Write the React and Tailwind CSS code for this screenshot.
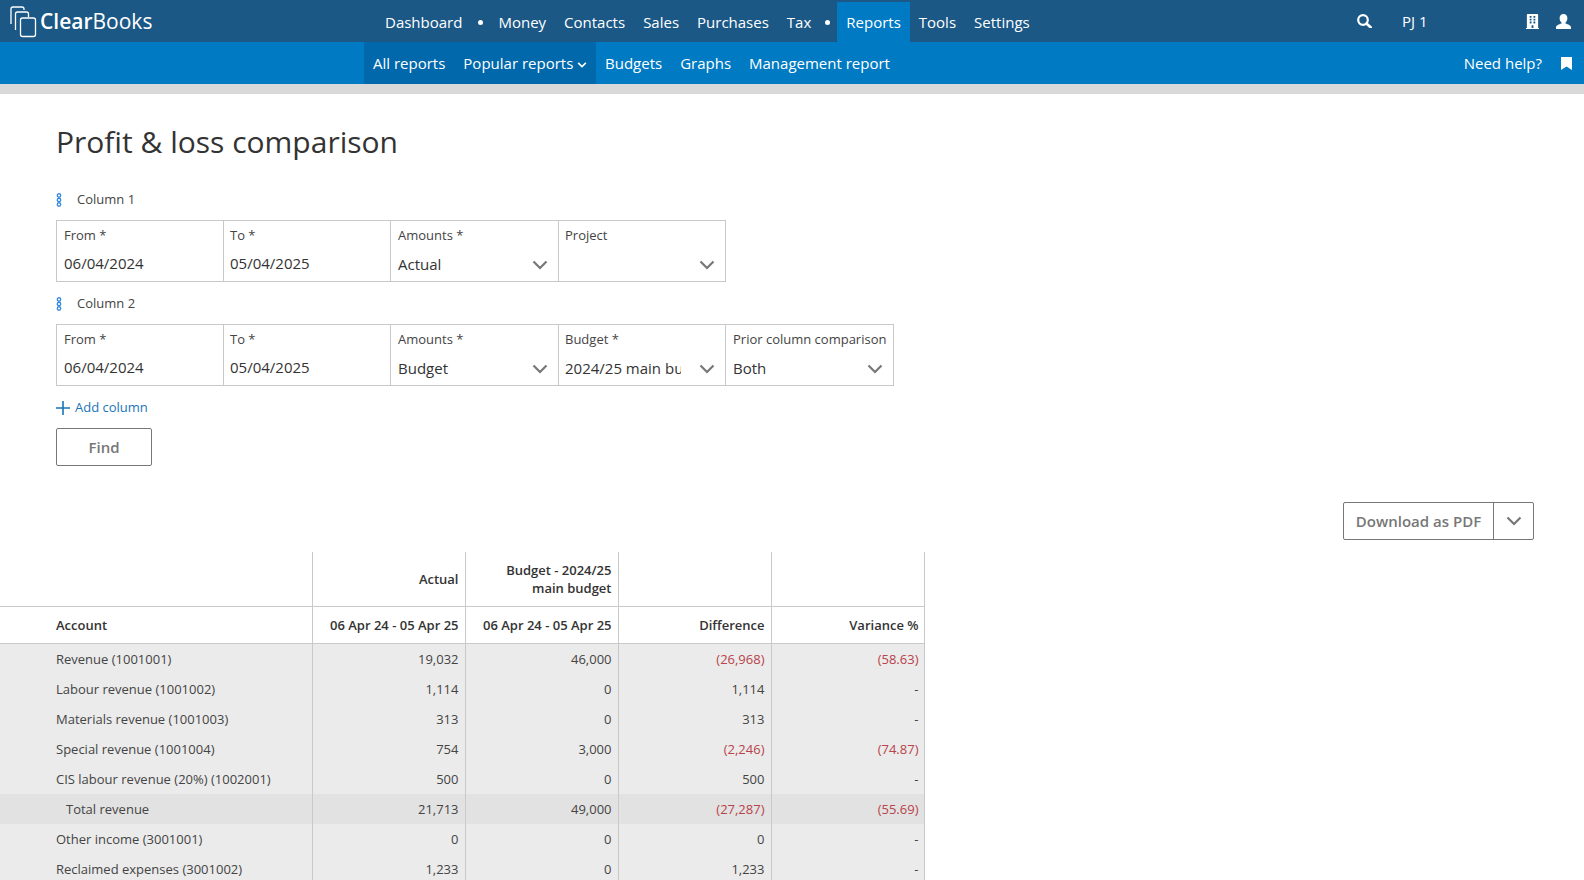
import React from "react";
import { FaBuilding, FaChevronDown } from "react-icons/fa";

const rows = [
  ["Revenue (1001001)", "19,032", "46,000", "(26,968)", "(58.63)"],
  ["Labour revenue (1001002)", "1,114", "0", "1,114", "-"],
  ["Materials revenue (1001003)", "313", "0", "313", "-"],
  ["Special revenue (1001004)", "754", "3,000", "(2,246)", "(74.87)"],
  ["CIS labour revenue (20%) (1002001)", "500", "0", "500", "-"],
  ["Total revenue", "21,713", "49,000", "(27,287)", "(55.69)"],
  ["Other income (3001001)", "0", "0", "0", "-"],
  ["Reclaimed expenses (3001002)", "1,233", "0", "1,233", "-"],
];

function Logo() {
  return (
    <svg width="28" height="36" viewBox="0 0 28 36" fill="none" stroke="#fff" strokeWidth="1.3" className="shrink-0">
      <path d="M1 21V6a2 2 0 0 1 2-2h9a2 2 0 0 1 2 2v1" />
      <path d="M5.500 27V11a2 2 0 0 1 2-2h9a2 2 0 0 1 2 2v3" />
      <rect x="10.500" y="15" width="15" height="18.500" rx="2" />
    </svg>
  );
}

function Chevron() {
  return (
    <svg width="16" height="10" viewBox="0 0 16 10" fill="none" stroke="#777" strokeWidth="2.2">
      <path d="M1.500 1.500 8 8l6.500-6.500" />
    </svg>
  );
}

function DragDots() {
  return (
    <svg width="6" height="14" viewBox="0 0 6 14" fill="none" stroke="#3a8fd6" strokeWidth="1.400" className="shrink-0">
      <circle cx="3" cy="2.500" r="1.700" />
      <circle cx="3" cy="7" r="1.700" />
      <circle cx="3" cy="11.500" r="1.700" />
    </svg>
  );
}

function SearchIcon() {
  return (
    <svg width="15" height="14" viewBox="0 0 15 14" fill="none" stroke="#fff" className="shrink-0">
      <circle cx="6" cy="6" r="4.800" strokeWidth="2.200" />
      <path d="M9.500 9.500 13.800 13.500" strokeWidth="2.600" strokeLinecap="round" />
    </svg>
  );
}

function UserIcon() {
  return (
    <svg width="15" height="15" viewBox="0 0 15 15" fill="#fff" className="shrink-0">
      <path d="M7.500 0C5 0 3.600 1.800 3.600 4.200c0 1.700.8 3.300 1.900 4.200v1.200C3 10.500 0 11.500 0 13.500V15h15v-1.500c0-2-3-3-5.500-3.900V8.400c1.100-.9 1.900-2.500 1.900-4.200C11.400 1.800 10 0 7.500 0z" />
    </svg>
  );
}

function BookmarkIcon() {
  return (
    <svg width="11" height="13" viewBox="0 0 11 13" fill="#fff" className="shrink-0">
      <path d="M0 0h11v13L5.500 9.500 0 13z" />
    </svg>
  );
}

function NavDot({ className }) {
  return <span className={`w-[5px] h-[5px] rounded-full bg-white mb-[17px] ${className}`} />;
}

function NavLink({ children, active }) {
  return <a className={`px-[9px] h-[40px] leading-[40px] ${active ? "bg-[#007ac3]" : ""}`}>{children}</a>;
}

function Field({ label, value, select, clip, width = "w-[167px]", last, tight }) {
  return (
    <div className={`${width} h-full shrink-0 pr-[7px] pt-[5px] ${tight ? "pl-[6px]" : "pl-[7px]"} ${last ? "" : "border-r border-[#c9c9c9]"} relative`}>
      <div className="text-[13px] leading-[18px] text-[#444] whitespace-nowrap">{label}</div>
      {select ? (
        <div className={`text-[15px] leading-[20px] mt-[10px] text-[#333] whitespace-nowrap overflow-hidden ${clip ? "w-[116px]" : ""}`}>
          {value || "\u00a0"}
        </div>
      ) : (
        <div className="text-[15px] leading-[20px] mt-[9px] text-[#333]">{value}</div>
      )}
      {select && (
        <div className="absolute right-[10px] top-[39px]">
          <Chevron />
        </div>
      )}
    </div>
  );
}

function ColumnForm({ name, children }) {
  return (
    <div>
      <div className="flex items-center h-[20px] text-[13px] text-[#444]">
        <DragDots />
        <span className="ml-[15px]">{name}</span>
      </div>
      <div className="flex w-fit h-[62px] mt-[10px] border border-[#c9c9c9]">{children}</div>
    </div>
  );
}

export default function App() {
  return (
    <div className="w-[1584px] h-[880px] overflow-hidden bg-white font-['Open_Sans',sans-serif] text-[#333]">
      <header className="h-[42px] bg-[#1b5886] flex text-white text-[15px]">
        <div className="w-[376px] pl-[10px] pt-[3px] flex shrink-0">
          <Logo />
          <span className="text-[21px] leading-[36px] ml-[2px] font-semibold">
            Clear<span className="font-normal">Books</span>
          </span>
        </div>
        <nav className="flex items-end h-full">
          <NavLink>Dashboard</NavLink>
          <NavDot className="ml-[7px] mr-[6px]" />
          <NavLink>Money</NavLink>
          <NavLink>Contacts</NavLink>
          <NavLink>Sales</NavLink>
          <NavLink>Purchases</NavLink>
          <NavLink>Tax</NavLink>
          <NavDot className="ml-[5px] mr-[7px]" />
          <NavLink active>Reports</NavLink>
          <NavLink>Tools</NavLink>
          <NavLink>Settings</NavLink>
        </nav>
        <div className="ml-auto flex items-center pr-[13px]">
          <SearchIcon />
          <span className="ml-[30px] w-[123px]">PJ 1</span>
          <FaBuilding className="text-[15px]" />
          <span className="ml-[16px]">
            <UserIcon />
          </span>
        </div>
      </header>

      <div className="h-[42px] bg-[#007ac3] flex text-white text-[15px]">
        <div className="w-[364px] shrink-0" />
        <div className="flex bg-[#0068ab] h-full leading-[42px] w-[232px] pl-[9px]">
          <a>All reports</a>
          <a className="ml-[18px] flex items-center">
            Popular reports
            <FaChevronDown className="text-[10px] ml-[4px] mt-[4px]" />
          </a>
        </div>
        <a className="ml-[9px] leading-[42px]">Budgets</a>
        <a className="ml-[18px] leading-[42px]">Graphs</a>
        <a className="ml-[18px] leading-[42px]">Management report</a>
        <div className="ml-auto flex items-center pr-[12px]">
          <span>Need help?</span>
          <span className="ml-[19px]">
            <BookmarkIcon />
          </span>
        </div>
      </div>

      <div className="h-[10px] bg-[#d9d9d9]" />

      <main className="px-[56px] pt-[28px]">
        <h1 className="text-[30px] leading-[40px] text-[#333]">Profit &amp; loss comparison</h1>

        <div className="mt-[28px] flex flex-col gap-[12px]">
          <ColumnForm name="Column 1">
            <Field label="From *" value="06/04/2024" />
            <Field label="To *" value="05/04/2025" tight />
            <Field label="Amounts *" value="Actual" select width="w-[168px]" />
            <Field label="Project" select last width="w-[166px]" tight />
          </ColumnForm>
          <ColumnForm name="Column 2">
            <Field label="From *" value="06/04/2024" />
            <Field label="To *" value="05/04/2025" tight />
            <Field label="Amounts *" value="Budget" select width="w-[168px]" />
            <Field label="Budget *" value="2024/25 main budget" select clip tight />
            <Field label="Prior column comparison" value="Both" select last />
          </ColumnForm>
        </div>

        <a className="flex items-center h-[18px] mt-[13px] text-[13px] text-[#1a75b8]">
          <svg width="14" height="14" viewBox="0 0 14 14" stroke="#1a75b8" strokeWidth="1.600">
            <path d="M7 0v14M0 7h14" />
          </svg>
          <span className="ml-[5px]">Add column</span>
        </a>

        <button className="block mt-[11px] w-[96px] h-[38px] border border-[#777] rounded-[2px] text-[15px] font-semibold text-[#777]">
          Find
        </button>

        <div className="flex justify-end mt-[36px] -mr-[6px]">
          <div className="flex h-[38px] border border-[#777] rounded-[2px] text-[#777]">
            <button className="w-[150px] text-[15px] font-semibold border-r border-[#777]">Download as PDF</button>
            <button className="w-[39px] flex items-center justify-center">
              <Chevron />
            </button>
          </div>
        </div>
      </main>

      <table className="mt-[12px] w-[924px] table-fixed border-collapse text-[13px]">
        <colgroup>
          <col className="w-[312px]" />
          <col className="w-[153px]" />
          <col className="w-[153px]" />
          <col className="w-[153px]" />
          <col className="w-[153px]" />
        </colgroup>
        <thead className="font-semibold text-[#333]">
          <tr className="h-[54px] border-b border-[#c9c9c9]">
            <th />
            <th className="border-l border-[#c9c9c9] text-right font-semibold pl-[6px] pr-[6px] pt-[2px]">Actual</th>
            <th className="border-l border-[#c9c9c9] text-right font-semibold pl-[6px] pr-[6px] leading-[18px]">
              Budget - 2024/25
              <br />
              main budget
            </th>
            <th className="border-l border-[#c9c9c9]" />
            <th className="border-x border-[#c9c9c9]" />
          </tr>
          <tr className="h-[37px] border-b border-[#c9c9c9]">
            <th className="text-left font-semibold pl-[56px] pt-[2px]">Account</th>
            <th className="border-l border-[#c9c9c9] text-right font-semibold pl-[6px] pr-[6px] pt-[2px]">06 Apr 24 - 05 Apr 25</th>
            <th className="border-l border-[#c9c9c9] text-right font-semibold pl-[6px] pr-[6px] pt-[2px]">06 Apr 24 - 05 Apr 25</th>
            <th className="border-l border-[#c9c9c9] text-right font-semibold pl-[6px] pr-[6px] pt-[2px]">Difference</th>
            <th className="border-x border-[#c9c9c9] text-right font-semibold pl-[6px] pr-[5px] pt-[2px]">Variance %</th>
          </tr>
        </thead>
        <tbody>
          {rows.map((r, idx) => {
            const total = r[0] === "Total revenue";
            const rowPad = idx === 0 ? "pt-[2px]" : "pt-[1px]";
            return (
              <tr key={r[0]} className={`${idx === 0 ? "h-[31px]" : "h-[30px]"} text-[#444] ${total ? "bg-[#e2e2e2]" : "bg-[#ebebeb]"}`}>
                <td className={`${rowPad} ${total ? "pl-[66px]" : "pl-[56px]"}`}>{r[0]}</td>
                {r.slice(1).map((v, i) => (
                  <td
                    key={i}
                    className={`text-right pl-[6px] ${rowPad} border-l border-[#c9c9c9] ${i === 3 ? "border-r pr-[5px]" : "pr-[6px]"} ${v.startsWith("(") ? "text-[#b8434a]" : ""}`}
                  >
                    {v}
                  </td>
                ))}
              </tr>
            );
          })}
        </tbody>
      </table>
    </div>
  );
}
